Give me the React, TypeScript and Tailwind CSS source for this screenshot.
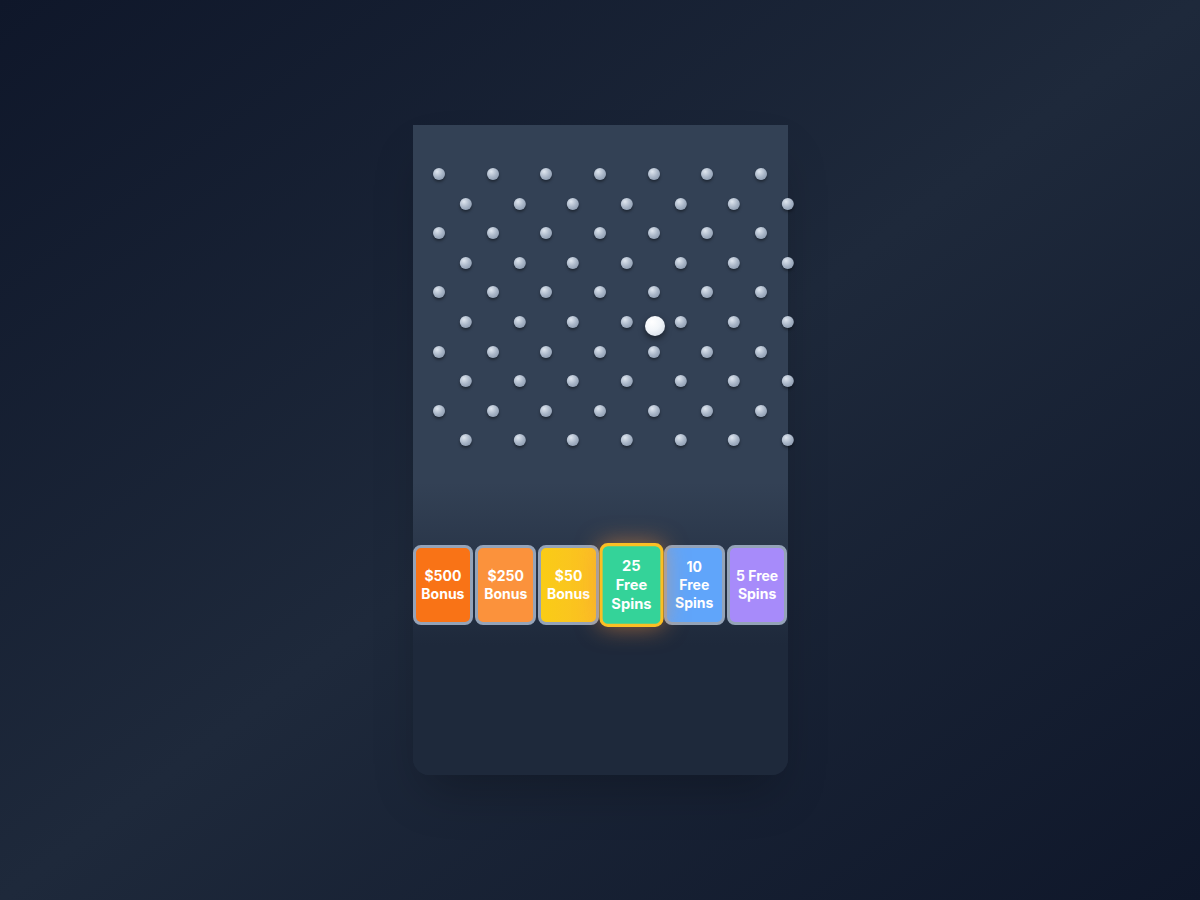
import React from 'react';

const SLOTS = [
  { label: '$500 Bonus', bg: 'bg-[#f97316]' },
  { label: '$250 Bonus', bg: 'bg-[#fb923c]' },
  { label: '$50 Bonus', bg: 'bg-gradient-to-r from-[#facc15] to-[#fbbf24]' },
  { label: '25 Free Spins', bg: 'bg-[#34d399]', active: true },
  { label: '10 Free Spins', bg: 'bg-[#60a5fa]' },
  { label: '5 Free Spins', bg: 'bg-[#a78bfa]' },
];

const ROWS = Array.from({ length: 10 }, (_, i) => i);
const PEGS = Array.from({ length: 7 }, (_, i) => i);

function Peg() {
  return (
    <div className="w-3 h-3 rounded-full bg-[radial-gradient(circle_at_35%_30%,#dfe6ef_0%,#a7b4c6_50%,#7f8ea3_100%)] shadow-[0_2px_3px_rgba(0,0,0,0.4)]" />
  );
}

export default function App() {
  return (
    <div
      className="min-h-screen w-full flex items-center justify-center bg-gradient-to-br from-[#0f172a] via-[#1e293b] to-[#0f172a]"
      style={{ fontFamily: 'Inter, "Noto Sans", sans-serif' }}
    >
      <div className="relative w-[375px] h-[650px] rounded-b-2xl shadow-2xl flex flex-col bg-[linear-gradient(to_bottom,#334155_55%,#1e293b_80%)]">
        {/* Board */}
        <div className="relative h-[420px] pt-[34.5px]">
          {ROWS.map((r) => (
            <div
              key={r}
              className={
                r % 2 === 0
                  ? 'h-[29.56px] flex items-center justify-around'
                  : 'h-[29.56px] flex items-center justify-around translate-x-[26.8px]'
              }
            >
              {PEGS.map((p) => (
                <Peg key={p} />
              ))}
            </div>
          ))}

          {/* Ball */}
          <div className="absolute left-[232.5px] top-[191px] w-5 h-5 rounded-full bg-[radial-gradient(circle_at_35%_30%,#ffffff_0%,#f1f5f9_45%,#cbd5e1_100%)] shadow-[0_3px_6px_rgba(0,0,0,0.5)]" />
        </div>

        {/* Prize slots */}
        <div className="h-[80px] flex gap-0.5">
          {SLOTS.map((s) => (
            <div
              key={s.label}
              className={
                s.active
                  ? `flex-1 ${s.bg} border-[3px] border-[#fbbf24] rounded-lg flex items-center justify-center px-1 text-center text-white font-bold text-sm leading-[18px] scale-105 z-10 shadow-[0_0_22px_rgba(251,146,60,0.55)]`
                  : `flex-1 ${s.bg} border-[3px] border-[#94a3b8] rounded-lg flex items-center justify-center px-1 text-center text-white font-bold text-sm leading-[18px]`
              }
            >
              {s.label}
            </div>
          ))}
        </div>

        <div className="flex-1" />
      </div>
    </div>
  );
}
